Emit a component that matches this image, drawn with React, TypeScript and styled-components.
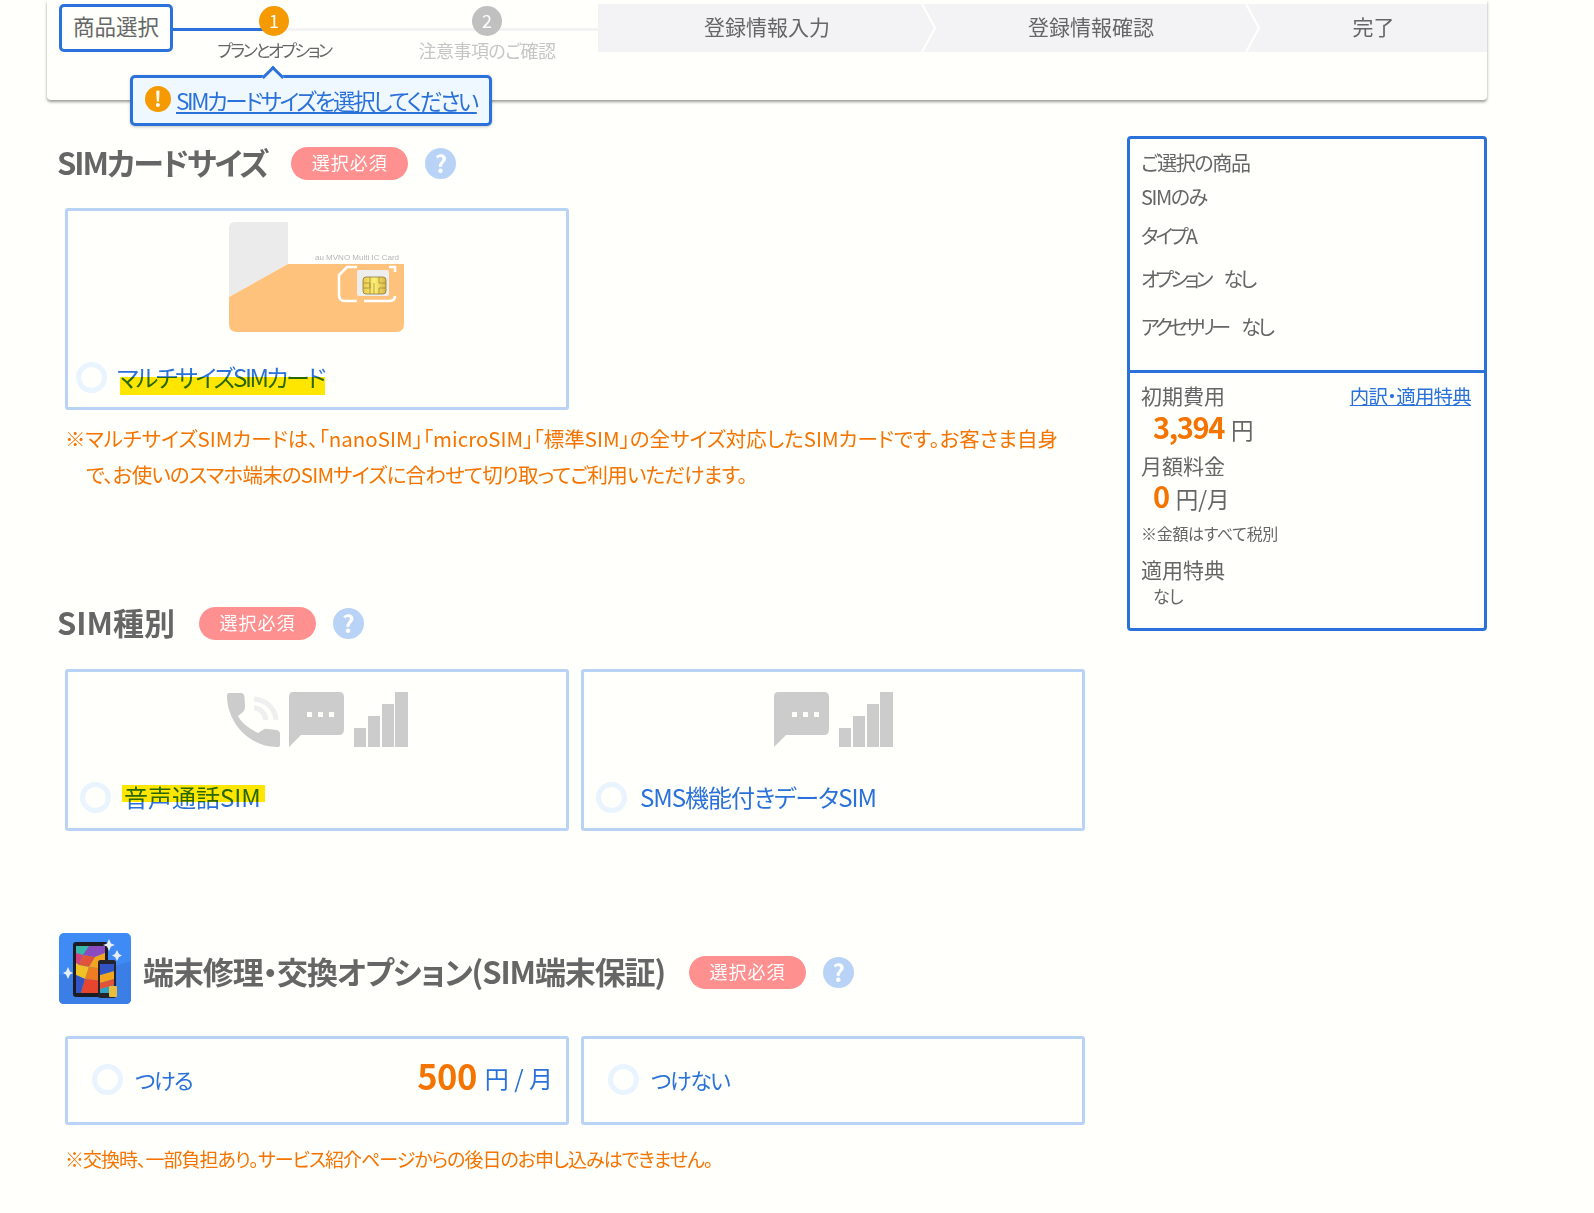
import React from "react";
import styled, { createGlobalStyle } from "styled-components";

const BLUE = "#2a72d9";
const PALE = "#b9d3f6";
const ORANGE = "#f57400";
const TEXT = "#666";

const Global = createGlobalStyle`
  html, body { margin: 0; padding: 0; background: #fffffc; }
  body {
    font-family: "Noto Sans CJK JP", "Noto Sans", sans-serif;
    font-feature-settings: "palt";
    color: ${TEXT};
    min-height: 100vh;
    overflow: hidden;
  }
`;

const Shell = styled.div`
  width: 1440px;
  margin-left: 47px;
`;

/* ---------- header ---------- */
const HeaderCard = styled.header`
  position: relative;
  height: 96px;
  padding: 4px 0 0 12px;
  display: flex;
  align-items: flex-start;
  background: #fffffc;
  border-radius: 0 0 4px 4px;
  box-shadow: 0 2px 3px rgba(60, 60, 50, 0.5);
`;
const CurrentStep = styled.div`
  box-sizing: border-box;
  position: relative;
  z-index: 1;
  width: 114px;
  height: 48px;
  border: 3px solid ${BLUE};
  border-radius: 5px;
  background: #fffffc;
  font-size: 21.5px;
  line-height: 38px;
  text-align: center;
  color: ${TEXT};
`;
const StepTrack = styled.div`
  position: relative;
  width: 425px;
  display: flex;
  &::before {
    content: "";
    position: absolute;
    left: 0;
    right: 0;
    top: 24px;
    height: 3px;
    background: #f3f3f6;
  }
  &::after {
    content: "";
    position: absolute;
    left: 0;
    width: 99px;
    top: 24px;
    height: 3px;
    background: ${BLUE};
  }
`;
const Step = styled.div<{ $first?: boolean }>`
  width: 214px;
  flex: none;
  margin-left: ${(p) => (p.$first ? "-6px" : "-1px")};
  display: flex;
  flex-direction: column;
  align-items: center;
`;
const StepDot = styled.div<{ $on?: boolean }>`
  position: relative;
  z-index: 1;
  width: 30px;
  height: 30px;
  margin-top: 2px;
  border-radius: 50%;
  background: ${(p) => (p.$on ? "#f59a00" : "#c0c0c0")};
  color: #fff;
  font-size: 18px;
  line-height: 28px;
  text-align: center;
`;
const StepLabel = styled.div<{ $on?: boolean }>`
  margin-top: 0;
  font-size: ${(p) => (p.$on ? "17px" : "18px")};
  letter-spacing: ${(p) => (p.$on ? "-2.4px" : "-0.5px")};
  line-height: 28px;
  white-space: nowrap;
  color: ${(p) => (p.$on ? TEXT : "#c6c6c6")};
`;
const ArrowSteps = styled.div`
  flex: 1;
  display: flex;
  height: 48px;
  background: #f3f3f6;
`;
const ArrowStep = styled.div<{ $w: number }>`
  position: relative;
  box-sizing: border-box;
  width: ${(p) => p.$w}px;
  padding-left: 14px;
  flex: none;
  text-align: center;
  font-size: 21px;
  line-height: 45px;
  color: ${TEXT};
`;
const Chevron = styled.svg`
  position: absolute;
  top: 0;
  right: -15px;
  width: 16px;
  height: 48px;
  z-index: 1;
`;
const Balloon = styled.div`
  position: absolute;
  left: 83px;
  top: 75px;
  box-sizing: border-box;
  width: 362px;
  height: 51px;
  z-index: 3;
  display: flex;
  align-items: center;
  padding-left: 12px;
  gap: 5px;
  border: 3px solid ${BLUE};
  border-radius: 5px;
  background: #eff7ff;
  box-shadow: 0 1px 3px rgba(60, 60, 60, 0.3);
  &::before {
    content: "";
    position: absolute;
    left: 132px;
    top: -9px;
    width: 13px;
    height: 13px;
    background: #eff7ff;
    border-left: 3px solid ${BLUE};
    border-top: 3px solid ${BLUE};
    transform: rotate(45deg);
  }
`;
const WarnDot = styled.span`
  flex: none;
  width: 26px;
  height: 26px;
  margin-top: -4px;
  border-radius: 50%;
  background: #f59a00;
  color: #fff;
  font-size: 21px;
  font-weight: 700;
  line-height: 25px;
  text-align: center;
`;
const BalloonLink = styled.a`
  margin-top: -2px;
  color: ${BLUE};
  font-size: 22.5px;
  letter-spacing: -2.4px;
  line-height: 30px;
  text-decoration: underline;
  white-space: nowrap;
`;

/* ---------- body ---------- */
const Main = styled.main`
  display: flex;
  align-items: flex-start;
`;
const LeftCol = styled.div`
  width: 1080px;
  flex: none;
  padding-left: 12px;
  box-sizing: border-box;
`;
const Section = styled.section<{ $top: number }>`
  margin-top: ${(p) => p.$top}px;
`;
const TitleRow = styled.div<{ $after: number }>`
  display: flex;
  align-items: center;
  margin-bottom: ${(p) => p.$after}px;
`;
const Title = styled.h2<{ $ls: number }>`
  margin: 0 0 0 -2px;
  padding-bottom: 3px;
  font-size: 31px;
  letter-spacing: ${(p) => p.$ls}px;
  line-height: 30px;
  font-weight: 700;
  color: ${TEXT};
  white-space: nowrap;
`;
const Badge = styled.span`
  width: 117px;
  height: 33px;
  margin-left: 24px;
  border-radius: 17px;
  background: #ff9090;
  color: #fff;
  font-size: 18px;
  letter-spacing: 1px;
  line-height: 31px;
  text-align: center;
`;
const Help = styled.span`
  width: 31px;
  height: 31px;
  margin-left: 17px;
  border-radius: 50%;
  background: ${PALE};
  color: #fff;
  font-size: 24px;
  font-weight: 700;
  line-height: 30px;
  text-align: center;
`;
const DeviceIcon = styled.svg`
  width: 72px;
  height: 71px;
  margin-right: 14px;
  margin-bottom: 8px;
  flex: none;
`;
const CardRow = styled.div`
  display: flex;
  gap: 12px;
  margin-left: 6px;
`;
const Card = styled.div<{ $tall?: number }>`
  box-sizing: border-box;
  width: 504px;
  height: ${(p) => p.$tall}px;
  border: 3px solid ${PALE};
  border-radius: 3px;
  background: #fffffc;
  display: flex;
  flex-direction: column;
`;
const CardArt = styled.div<{ $top: number; $after: number }>`
  display: flex;
  justify-content: center;
  padding-top: ${(p) => p.$top}px;
  padding-bottom: ${(p) => p.$after}px;
`;
const SimSlot = styled.div`
  margin-right: 2px;
  display: flex;
`;
const ChoiceRow = styled.label<{ $left: number; $fill?: boolean }>`
  box-sizing: border-box;
  display: flex;
  align-items: center;
  height: ${(p) => (p.$fill ? "100%" : "36px")};
  padding-left: ${(p) => p.$left}px;
  padding-right: 13px;
  padding-bottom: ${(p) => (p.$fill ? "3px" : "0")};
`;
const Radio = styled.span`
  flex: none;
  box-sizing: border-box;
  width: 31px;
  height: 31px;
  border: 5px solid #e9f4ff;
  border-radius: 50%;
  background: #fffffc;
`;
const ChoiceText = styled.span<{ $gap: number; $ls?: number; $size?: number }>`
  position: relative;
  margin-left: ${(p) => p.$gap}px;
  font-size: ${(p) => p.$size ?? 24}px;
  letter-spacing: ${(p) => p.$ls ?? 0}px;
  line-height: 36px;
  color: ${BLUE};
  white-space: nowrap;
`;
const Marker = styled.span<{ $left: number; $top: number; $w: number; $h: number }>`
  position: absolute;
  left: ${(p) => p.$left}px;
  top: ${(p) => p.$top}px;
  width: ${(p) => p.$w}px;
  height: ${(p) => p.$h}px;
  background: #ffe600;
  mix-blend-mode: multiply;
`;
const Price = styled.span`
  margin-left: auto;
  margin-bottom: 5px;
  font-size: 24px;
  color: ${BLUE};
  white-space: nowrap;
  & b {
    font-size: 34.5px;
    letter-spacing: -0.5px;
    font-weight: 700;
    line-height: 1;
    vertical-align: -2px;
    color: ${ORANGE};
    margin-right: 8px;
  }
`;
const Note = styled.p<{ $top: number; $small?: boolean }>`
  margin: ${(p) => p.$top}px 0 0 6px;
  width: 1010px;
  padding-left: 21px;
  text-indent: -21px;
  font-size: ${(p) => (p.$small ? 19 : 20.5)}px;
  letter-spacing: ${(p) => (p.$small ? "-1px" : "0")};
  line-height: 36px;
  color: ${ORANGE};
`;
const NoteLine = styled.span<{ $ls?: number; $hang?: boolean }>`
  display: block;
  white-space: nowrap;
  letter-spacing: ${(p) => p.$ls ?? 0}px;
  text-indent: ${(p) => (p.$hang ? "0" : "-21px")};
`;

/* ---------- summary ---------- */
const Summary = styled.aside`
  box-sizing: border-box;
  width: 360px;
  height: 495px;
  margin-top: 36px;
  border: 3px solid ${BLUE};
  border-radius: 4px;
  background: #fffffc;
  display: flex;
  flex-direction: column;
`;
const SummaryTop = styled.div`
  height: 234px;
  flex: none;
  box-sizing: border-box;
  padding: 7px 11px 0;
  border-bottom: 3px solid ${BLUE};
`;
const SummaryLine = styled.div<{ $mt?: number; $ls?: number }>`
  font-size: 20px;
  letter-spacing: ${(p) => p.$ls ?? 0}px;
  line-height: 34px;
  margin-top: ${(p) => p.$mt ?? 0}px;
  white-space: nowrap;
`;
const NoneTag = styled.span`
  margin-left: 14px;
  letter-spacing: -2.8px;
`;
const SummaryBottom = styled.div`
  padding: 8px 11px 0;
`;
const CostHead = styled.div<{ $mt?: number }>`
  display: flex;
  justify-content: space-between;
  align-items: baseline;
  margin-top: ${(p) => p.$mt ?? 0}px;
  padding-right: 2px;
  font-size: 21px;
  line-height: 28px;
`;
const MiniLink = styled.a`
  font-size: 19.5px;
  letter-spacing: -0.8px;
  color: ${BLUE};
  text-decoration: underline;
`;
const CostValue = styled.div`
  margin-top: 2px;
  padding-left: 12px;
  font-size: 22.5px;
  line-height: 35px;
  & b {
    font-size: 29px;
    letter-spacing: -1.4px;
    font-weight: 700;
    line-height: 1;
    color: ${ORANGE};
    margin-right: 7px;
  }
`;
const TaxNote = styled.div`
  margin-top: 2px;
  font-size: 16px;
  letter-spacing: -0.3px;
  line-height: 31px;
`;
const SmallIndent = styled.div`
  margin-top: 1px;
  padding-left: 12px;
  font-size: 17px;
  letter-spacing: -0.5px;
  line-height: 24px;
`;

/* ---------- drawings ---------- */
const SimArt = () => (
  <svg width="175" height="110" viewBox="0 0 175 110">
    <path d="M6 0H59V42L0 75V6Q0 0 6 0Z" fill="#ebebec" />
    <path d="M59 42H175V102Q175 110 167 110H8Q0 110 0 102V75Z" fill="#ffc27c" />
    <text x="86" y="38" fontSize="8" fill="#b5b5b8" fontFamily="Liberation Sans, sans-serif">
      au MVNO Multi IC Card
    </text>
    <path d="M128 45H118L110 53V73Q110 79 116 79H128M135 79H160Q166 79 166 74M166 50V45H160" fill="none" stroke="#fff" strokeWidth="2.6" />
    <rect x="128" y="48" width="32" height="26" rx="2" fill="#eeeeee" />
    <defs>
      <linearGradient id="chip" x1="0" x2="1">
        <stop offset="0" stopColor="#e9c94a" />
        <stop offset="0.5" stopColor="#fdf176" />
        <stop offset="1" stopColor="#d9b344" />
      </linearGradient>
    </defs>
    <rect x="134" y="55" width="23" height="17" rx="3" fill="url(#chip)" stroke="#8b7a3c" strokeWidth="0.8" />
    <path d="M134 61H141V66H134M141 55V72M150 55V61H157M150 72V66H157M145 61V72" fill="none" stroke="#a38a3a" strokeWidth="0.8" />
  </svg>
);

const Bubble = () => (
  <>
    <path d="M66 0H112Q117 0 117 5V37Q117 43 112 43H74L62 55V5Q62 0 66 0Z" fill="#cccccc" />
    <rect x="80" y="20" width="5" height="5" fill="#fffffc" />
    <rect x="91" y="20" width="5" height="5" fill="#fffffc" />
    <rect x="102" y="20" width="5" height="5" fill="#fffffc" />
  </>
);
const Bars = () => (
  <>
    <rect x="127" y="36" width="12" height="19" fill="#cccccc" />
    <rect x="141" y="24" width="12" height="31" fill="#cccccc" />
    <rect x="155" y="12" width="12" height="43" fill="#cccccc" />
    <rect x="168" y="0" width="13" height="55" fill="#cccccc" />
  </>
);
const VoiceArt = () => (
  <svg width="181" height="55" viewBox="0 0 181 55">
    <path d="M2 1H14Q17 1 17.500 5L18 15Q18 18 16 20L11 24Q15 33 31 41L36 38Q38 36 41 37L50 38Q53 39 53 42V53Q53 55 50 55C22 55 0 30 0 4Q0 1 2 1Z" fill="#cccccc" />
    <path d="M27 7C38 8 48 15 49 28M27 16C33 16 38 21 39 28" fill="none" stroke="#efefef" strokeWidth="5" />
    <Bubble />
    <Bars />
  </svg>
);
const DataArt = () => (
  <svg width="120" height="55" viewBox="61 0 120 55">
    <Bubble />
    <Bars />
  </svg>
);
const Device = () => (
  <DeviceIcon viewBox="0 0 72 71">
    <rect width="72" height="71" rx="5" fill="#3f8bf6" />
    <path d="M0 42Q36 40 72 28V66Q72 71 67 71H5Q0 71 0 66Z" fill="#3a7ee6" />
    <rect x="14" y="9" width="35" height="55" rx="3" fill="#1c1c22" />
    <rect x="17" y="13" width="29" height="47" fill="#3fa0c8" />
    <path d="M17 13H30L24 22L17 20Z" fill="#37b7a8" />
    <path d="M30 13H46V20L36 24L24 22Z" fill="#8a4bc0" />
    <path d="M17 20L24 22L20 32L17 30Z" fill="#d2417e" />
    <path d="M24 22L36 24L30 34L20 32Z" fill="#e2543a" />
    <path d="M36 24L46 20V36L30 34Z" fill="#f2a51f" />
    <path d="M17 30L20 32L30 34L26 46L17 42Z" fill="#f0c226" />
    <path d="M30 34L46 36V48L26 46Z" fill="#ee7d22" />
    <path d="M17 42L26 46L22 60H17Z" fill="#3354c4" />
    <path d="M26 46L46 48V60H22Z" fill="#e8452f" />
    <rect x="39" y="27" width="18" height="38" rx="2.500" fill="#24242a" />
    <rect x="41" y="31" width="14" height="29" fill="#2fa3c4" />
    <path d="M41 42L55 38V46L41 50Z" fill="#f2a51f" />
    <path d="M41 50L55 46V52L41 56Z" fill="#e2543a" />
    <path d="M41 31H55V38L41 42Z" fill="#3354c4" />
    <rect x="50" y="53" width="8" height="11" rx="1" fill="#e8bf3d" />
    <path d="M50 6L52 10.500L56 12L52 13.500L50 18L48 13.500L44 12L48 10.500Z" fill="#e8eef7" />
    <path d="M58 17L60 21L63 22.500L60 24L58 28L56 24L53 22.500L56 21Z" fill="#e8eef7" />
    <path d="M9 34L11 38.500L14 40L11 41.500L9 46L7 41.500L4 40L7 38.500Z" fill="#e8eef7" />
  </DeviceIcon>
);

export default function App() {
  return (
    <>
      <Global />
      <Shell>
        <HeaderCard>
          <CurrentStep>商品選択</CurrentStep>
          <StepTrack>
            <Step $first>
              <StepDot $on>1</StepDot>
              <StepLabel $on>プランとオプション</StepLabel>
            </Step>
            <Step>
              <StepDot>2</StepDot>
              <StepLabel>注意事項のご確認</StepLabel>
            </Step>
          </StepTrack>
          <ArrowSteps>
            <ArrowStep $w={324}>
              登録情報入力
              <Chevron viewBox="0 0 16 48">
                <path d="M1 0L14 24L1 48" fill="none" stroke="#fffffc" strokeWidth="2" />
              </Chevron>
            </ArrowStep>
            <ArrowStep $w={324}>
              登録情報確認
              <Chevron viewBox="0 0 16 48">
                <path d="M1 0L14 24L1 48" fill="none" stroke="#fffffc" strokeWidth="2" />
              </Chevron>
            </ArrowStep>
            <ArrowStep $w={241}>完了</ArrowStep>
          </ArrowSteps>
          <Balloon>
            <WarnDot>!</WarnDot>
            <BalloonLink href="#">SIMカードサイズを選択してください</BalloonLink>
          </Balloon>
        </HeaderCard>

        <Main>
          <LeftCol>
            <Section $top={47}>
              <TitleRow $after={28}>
                <Title $ls={-2}>SIMカードサイズ</Title>
                <Badge>選択必須</Badge>
                <Help>?</Help>
              </TitleRow>
              <CardRow>
                <Card $tall={202}>
                  <CardArt $top={11} $after={27}>
                    <SimSlot>
                      <SimArt />
                    </SimSlot>
                  </CardArt>
                  <ChoiceRow $left={8}>
                    <Radio />
                    <ChoiceText $gap={10} $ls={-2.5}>
                      マルチサイズSIMカード
                      <Marker $left={3} $top={18} $w={205} $h={18} />
                    </ChoiceText>
                  </ChoiceRow>
                </Card>
              </CardRow>
              <Note $top={10}>
                <NoteLine>※マルチサイズSIMカードは、「nanoSIM」「microSIM」「標準SIM」の全サイズ対応したSIMカードです。お客さま自身</NoteLine>
                <NoteLine $ls={-0.8} $hang>で、お使いのスマホ端末のSIMサイズに合わせて切り取ってご利用いただけます。</NoteLine>
              </Note>
            </Section>

            <Section $top={115}>
              <TitleRow $after={29}>
                <Title $ls={0}>SIM種別</Title>
                <Badge>選択必須</Badge>
                <Help>?</Help>
              </TitleRow>
              <CardRow>
                <Card $tall={162}>
                  <CardArt $top={20} $after={32}>
                    <VoiceArt />
                  </CardArt>
                  <ChoiceRow $left={12}>
                    <Radio />
                    <ChoiceText $gap={13}>
                      音声通話SIM
                      <Marker $left={-2} $top={6} $w={143} $h={17} />
                    </ChoiceText>
                  </ChoiceRow>
                </Card>
                <Card $tall={162}>
                  <CardArt $top={20} $after={32}>
                    <DataArt />
                  </CardArt>
                  <ChoiceRow $left={12}>
                    <Radio />
                    <ChoiceText $gap={13} $ls={-1}>SMS機能付きデータSIM</ChoiceText>
                  </ChoiceRow>
                </Card>
              </CardRow>
            </Section>

            <Section $top={102}>
              <TitleRow $after={24}>
                <Device />
                <Title $ls={-1.1}>端末修理・交換オプション(SIM端末保証)</Title>
                <Badge>選択必須</Badge>
                <Help>?</Help>
              </TitleRow>
              <CardRow>
                <Card $tall={89}>
                  <ChoiceRow $left={24} $fill>
                    <Radio />
                    <ChoiceText $gap={12} $size={22} $ls={-1.5}>つける</ChoiceText>
                    <Price>
                      <b>500</b>円 / 月
                    </Price>
                  </ChoiceRow>
                </Card>
                <Card $tall={89}>
                  <ChoiceRow $left={24} $fill>
                    <Radio />
                    <ChoiceText $gap={12} $size={22} $ls={-1.5}>つけない</ChoiceText>
                  </ChoiceRow>
                </Card>
              </CardRow>
              <Note $top={16} $small>※交換時、一部負担あり。サービス紹介ページからの後日のお申し込みはできません。</Note>
            </Section>
          </LeftCol>

          <Summary>
            <SummaryTop>
              <SummaryLine $ls={-1.4}>ご選択の商品</SummaryLine>
              <SummaryLine $ls={-1.4}>SIMのみ</SummaryLine>
              <SummaryLine $mt={5} $ls={-2.9}>タイプA</SummaryLine>
              <SummaryLine $mt={9} $ls={-3.9}>
                オプション<NoneTag>なし</NoneTag>
              </SummaryLine>
              <SummaryLine $mt={14} $ls={-3.9}>
                アクセサリー<NoneTag>なし</NoneTag>
              </SummaryLine>
            </SummaryTop>
            <SummaryBottom>
              <CostHead>
                初期費用
                <MiniLink href="#">内訳・適用特典</MiniLink>
              </CostHead>
              <CostValue>
                <b>3,394</b>円
              </CostValue>
              <CostHead $mt={4}>月額料金</CostHead>
              <CostValue>
                <b>0</b>円/月
              </CostValue>
              <TaxNote>※金額はすべて税別</TaxNote>
              <CostHead $mt={6}>適用特典</CostHead>
              <SmallIndent>なし</SmallIndent>
            </SummaryBottom>
          </Summary>
        </Main>
      </Shell>
    </>
  );
}
